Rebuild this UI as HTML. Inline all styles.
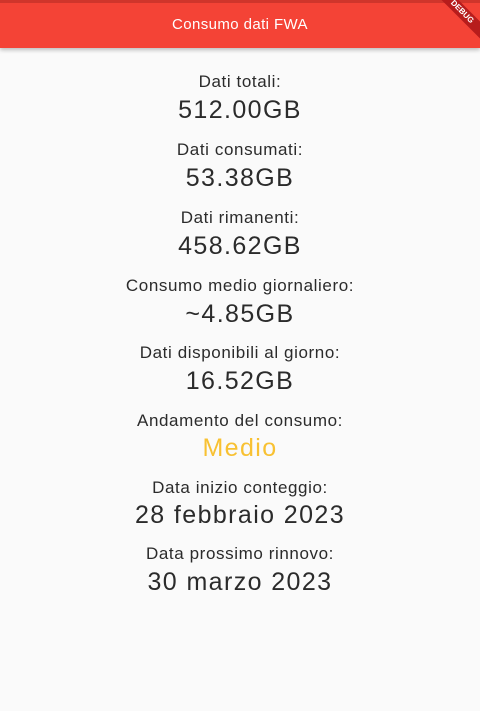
<!DOCTYPE html>
<html><head><meta charset="utf-8"><style>
body{margin:0;width:480px;height:711px;background:#fafafa;font-family:"Liberation Sans",Arial,sans-serif;overflow:hidden;position:relative}
.bar{position:absolute;left:0;top:0;width:480px;height:48px;background:#f44336;box-shadow:0 2px 4px rgba(0,0,0,.25)}
.bar .st{position:absolute;left:0;top:0;width:480px;height:3px;background:#d0352b}
.title{position:absolute;left:0;width:480px;top:16px;text-align:center;color:#fff;font-size:15px;line-height:18px;letter-spacing:0.4px}
.l,.v{position:absolute;left:0;width:480px;text-align:center;color:#2b2b2b}
.l{font-size:17px;line-height:20px;letter-spacing:0.6px}
.v{font-size:25px;line-height:28px;letter-spacing:1.4px}
.dbg{position:absolute;right:-22px;top:6px;width:80px;height:12px;background:#b71c1c;transform:rotate(45deg);color:#fff;font-size:8px;font-weight:bold;line-height:12px;text-align:center}
</style></head><body>
<div class="bar"><div class="st"></div><div class="title">Consumo dati FWA</div></div>
<div class="dbg">DEBUG</div>
<div class="l" style="top:72px">Dati totali:</div>
<div class="v" style="top:96px">512.00GB</div>
<div class="l" style="top:140px">Dati consumati:</div>
<div class="v" style="top:164px">53.38GB</div>
<div class="l" style="top:208px">Dati rimanenti:</div>
<div class="v" style="top:232px">458.62GB</div>
<div class="l" style="top:276px">Consumo medio giornaliero:</div>
<div class="v" style="top:300px">~4.85GB</div>
<div class="l" style="top:343px">Dati disponibili al giorno:</div>
<div class="v" style="top:367px">16.52GB</div>
<div class="l" style="top:411px">Andamento del consumo:</div>
<div class="v" style="top:434px;color:#f8c132">Medio</div>
<div class="l" style="top:478px">Data inizio conteggio:</div>
<div class="v" style="top:501px">28 febbraio 2023</div>
<div class="l" style="top:544px">Data prossimo rinnovo:</div>
<div class="v" style="top:568px">30 marzo 2023</div>
</body></html>
